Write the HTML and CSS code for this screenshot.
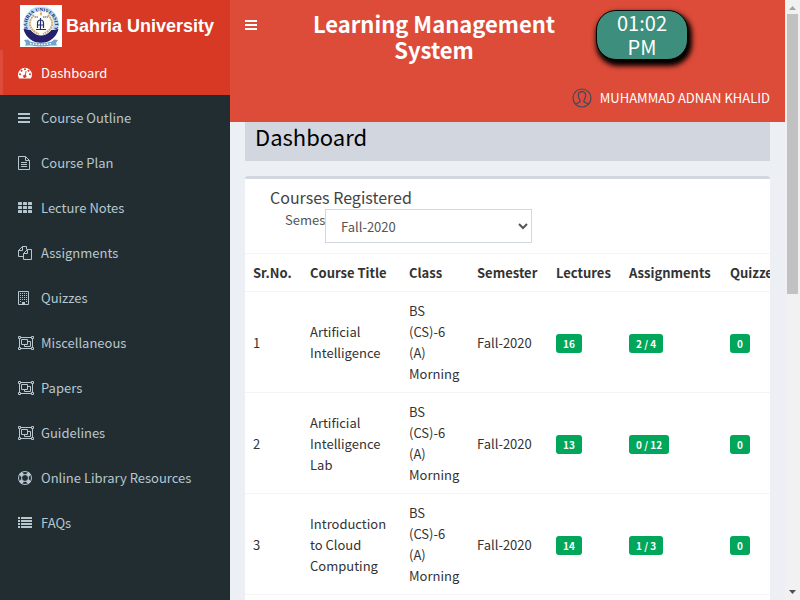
FILE: index.html
```html
<!DOCTYPE html>
<html lang="en">
<head>
<meta charset="utf-8">
<title>Learning Management System</title>
<link rel="stylesheet" href="styles.css">
</head>
<body>
<svg class="defs" aria-hidden="true">
  <symbol id="group" viewBox="0 0 16 14">
    <path fill="none" stroke="currentColor" d="M.5.5h2v2h-2zM13.500.5h2v2h-2zM.5 11.500h2v2h-2zM13.500 11.500h2v2h-2zM3 1.500h10M3 12.500h10M1.500 3v8M14.500 3v8M3.500 3.500h6v5h-6zM9.500 5.500h3v5h-6v-2"/>
  </symbol>
  <symbol id="bars" viewBox="0 0 12 10">
    <path fill="currentColor" d="M0 0h12v2H0zM0 4h12v2H0zM0 8h12v2H0z"/>
  </symbol>
</svg>
<div class="app">
  <aside class="sidebar">
    <a class="brand" href="#">
      <svg class="crest" viewBox="0 0 42 42" aria-hidden="true">
        <path fill="#fff" d="M0 0h42v42H0z"/>
        <circle cx="21" cy="19" r="17.500" fill="#b9dff2"/>
        <path fill="#24206b" d="M3.500 24a18 18 0 0 0 35 0l-4.500 1H8z"/>
        <circle cx="21" cy="18" r="12.500" fill="#fffdf8"/>
        <path fill="none" stroke="#c9ad7c" stroke-width="2" stroke-dasharray="2 .6" d="M14 10c-7 7-5 15 5 19M28 10c7 7 5 15-5 19"/>
        <path fill="none" stroke="#4b4a60" d="M14.500 12h4M23 12h5" stroke-dasharray="1.500 .5"/>
        <path fill="#f39a24" d="M21 6l1 3-1 2-1-2z"/>
        <path fill="none" stroke="#24306f" stroke-width="1.200" d="M20.500 13v12M16 24.500h10M17.500 23v-5q0-3 3-3t3 3v5M17 20h7"/>
        <path fill="#6fa6cc" d="M4 35l4-.5 2 2q11 3 22 0l2-2 4 .5-2 3 1 2.500h-6q-10 2-20 0H5l1-2.500z"/>
        <path fill="none" stroke="#fff" stroke-width="1.400" stroke-dasharray="1.500 1.300" d="M10 38.500q11 2 22 0"/>
        <path id="arc" fill="none" d="M7.500 24A14 14 0 1 1 34.500 24"/>
        <text class="crest-text"><textPath href="#arc" startOffset="50%">BAHRIA UNIVERSITY</textPath></text>
      </svg>
      <span>Bahria University</span>
    </a>
    <nav>
      <a class="item active" href="#"><span class="icon"><svg width="14" height="14" viewBox="0 0 14 14"><path fill="currentColor" fill-rule="evenodd" d="M1.200 12.600A7 7 0 1 1 12.800 12.600H1.200zM7 4.200a1 1 0 1 0 0-2 1 1 0 0 0 0 2zM3.500 5.700a1 1 0 1 0 0-2 1 1 0 0 0 0 2zM10.500 5.700a1 1 0 1 0 0-2 1 1 0 0 0 0 2zM2 9.200a1 1 0 1 0 0-2 1 1 0 0 0 0 2zM12 9.200a1 1 0 1 0 0-2 1 1 0 0 0 0 2zM7.700 5l-.9 3.700a1.600 1.600 0 1 0 .9.300l.9-3.700z"/></svg></span>Dashboard</a>
      <a class="item" href="#"><span class="icon"><svg width="12" height="10"><use href="#bars"/></svg></span>Course Outline</a>
      <a class="item" href="#"><span class="icon"><svg width="12" height="14" viewBox="0 0 12 14"><path fill="none" stroke="currentColor" d="M.5.5h7l4 4v9H.5zM7.500.5v4h4M3 6.500h6M3 8.500h6M3 10.500h6"/></svg></span>Course Plan</a>
      <a class="item" href="#"><span class="icon"><svg width="14" height="11" viewBox="0 0 14 11"><g fill="currentColor"><rect width="4" height="3" rx=".6"/><rect x="5" width="4" height="3" rx=".6"/><rect x="10" width="4" height="3" rx=".6"/><rect y="4" width="4" height="3" rx=".6"/><rect x="5" y="4" width="4" height="3" rx=".6"/><rect x="10" y="4" width="4" height="3" rx=".6"/><rect y="8" width="4" height="3" rx=".6"/><rect x="5" y="8" width="4" height="3" rx=".6"/><rect x="10" y="8" width="4" height="3" rx=".6"/></g></svg></span>Lecture Notes</a>
      <a class="item" href="#"><span class="icon"><svg width="14" height="14" viewBox="0 0 14 14"><path fill="none" stroke="currentColor" d="M5.500 10.500h-5v-6l4-4h4v3M4.500.5v4h-4M5.500 13.500v-6l4-4h4v10zM9.500 3.500v4h-4"/></svg></span>Assignments</a>
      <a class="item" href="#"><span class="icon"><svg width="11" height="14" viewBox="0 0 11 14"><path fill="none" stroke="currentColor" d="M.5.500h10v13H.5z"/><path fill="none" stroke="currentColor" stroke-dasharray="1 1" d="M2 2.500h7M2 4.500h7M2 6.500h7M2 8.500h7M2 10.500h1M8 10.500h1"/><path fill="currentColor" d="M4 11h3v3H4z"/></svg></span>Quizzes</a>
      <a class="item" href="#"><span class="icon"><svg width="16" height="14"><use href="#group"/></svg></span>Miscellaneous</a>
      <a class="item" href="#"><span class="icon"><svg width="16" height="14"><use href="#group"/></svg></span>Papers</a>
      <a class="item" href="#"><span class="icon"><svg width="16" height="14"><use href="#group"/></svg></span>Guidelines</a>
      <a class="item" href="#"><span class="icon"><svg width="14" height="14" viewBox="0 0 14 14"><g fill="none" stroke="currentColor"><circle cx="7" cy="7" r="6.500"/><circle cx="7" cy="7" r="3.500"/><path stroke-width="4" d="M2.200 2.200l2.500 2.500M11.800 2.200L9.300 4.700M2.200 11.800l2.500-2.500M11.800 11.800L9.300 9.300"/></g></svg></span>Online Library Resources</a>
      <a class="item" href="#"><span class="icon"><svg width="14" height="11" viewBox="0 0 14 11"><path fill="currentColor" d="M0 0h2v2H0zM3 0h11v2H3zM0 3h2v2H0zM3 3h11v2H3zM0 6h2v2H0zM3 6h11v2H3zM0 9h2v2H0zM3 9h11v2H3z"/></svg></span>FAQs</a>
    </nav>
  </aside>
  <div class="main">
    <header class="topbar">
      <div class="topbar-row">
        <button class="toggle" type="button" aria-label="Toggle navigation"><svg width="12" height="10"><use href="#bars"/></svg></button>
        <h1 class="site-title">Learning Management System</h1>
        <div class="clock">01:02 PM</div>
      </div>
      <a class="user" href="#">
        <svg width="20" height="20" viewBox="0 0 20 20" aria-hidden="true"><g fill="none" stroke="#3b4a5e" stroke-width="1.200"><circle cx="10" cy="10" r="9"/><path d="M3.500 16.200c1-1.200 4.300-1.300 4.600-2.700.1-1-.1-1.500-.6-2.300C6.500 9.500 6 6.500 7 4.500c1-1.700 5-1.700 6 0 1 2 .5 5-.5 6.700-.5.8-.7 1.300-.6 2.300.3 1.400 3.600 1.500 4.600 2.700"/><path stroke-width=".6" d="M7.500 5c1.500-.9 3.500-.9 5 0"/></g></svg>
        <span>MUHAMMAD ADNAN KHALID</span>
      </a>
    </header>
    <main class="content">
      <h2 class="page-title">Dashboard</h2>
      <section class="box">
        <div class="box-head">
          <h3 class="box-title">Courses Registered</h3>
          <div class="filter">
            <label for="semester">Semester</label>
            <select id="semester"><option>Fall-2020</option></select>
          </div>
        </div>
        <div class="table-wrap">
          <table>
            <colgroup><col class="c-no"><col class="c-title"><col class="c-class"><col class="c-sem"><col class="c-lec"><col class="c-asg"><col class="c-quiz"></colgroup>
            <thead><tr><th>Sr.No.</th><th>Course Title</th><th>Class</th><th>Semester</th><th>Lectures</th><th>Assignments</th><th>Quizzes</th></tr></thead>
            <tbody>
              <tr><td>1</td><td>Artificial Intelligence</td><td>BS (CS)-6 (A) Morning</td><td>Fall-2020</td><td><span class="badge">16</span></td><td><span class="badge">2 / 4</span></td><td><span class="badge">0</span></td></tr>
              <tr><td>2</td><td>Artificial Intelligence Lab</td><td>BS (CS)-6 (A) Morning</td><td>Fall-2020</td><td><span class="badge">13</span></td><td><span class="badge">0 / 12</span></td><td><span class="badge">0</span></td></tr>
              <tr><td>3</td><td>Introduction to Cloud Computing</td><td>BS (CS)-6 (A) Morning</td><td>Fall-2020</td><td><span class="badge">14</span></td><td><span class="badge">1 / 3</span></td><td><span class="badge">0</span></td></tr>
              <tr class="spacer"><td colspan="7"></td></tr>
            </tbody>
          </table>
        </div>
      </section>
    </main>
  </div>
  <div class="scrollbar" aria-hidden="true">
    <svg width="15" height="14" viewBox="0 0 15 14"><path fill="#a3a3a3" d="M4 10l3.500-4L11 10z"/></svg>
    <div class="track"><div class="thumb"></div></div>
    <svg width="15" height="14" viewBox="0 0 15 14"><path fill="#505050" d="M4 4l3.500 4L11 4z"/></svg>
  </div>
</div>
</body>
</html>
```
FILE: styles.css
```css
* { box-sizing: border-box; }
body {
  margin: 0;
  font-family: "Noto Sans CJK SC", "Open Sans", sans-serif;
  font-size: 13px;
  line-height: 21px;
  color: #333;
  background: #ecf0f5;
}
h1, h2, h3 { margin: 0; }
a { color: inherit; text-decoration: none; }
svg { display: block; }
.defs { position: absolute; width: 0; height: 0; }

.app { display: flex; height: 100vh; overflow: hidden; }

.sidebar { flex: 0 0 230px; min-width: 0; background: #222d32; color: #b8c7ce; }
.brand {
  display: flex;
  align-items: center;
  gap: 4px;
  height: 50px;
  padding: 2px 0 0 20px;
  background: #d73925;
  color: #fff;
  font-family: "Liberation Sans", Arial, sans-serif;
  font-size: 18px;
  font-weight: bold;
  white-space: nowrap;
}
.crest { width: 42px; height: 42px; flex: none; }
.crest-text {
  font-family: "Liberation Serif", serif;
  font-size: 5px;
  font-weight: bold;
  fill: #24206b;
  text-anchor: middle;
}
.item {
  display: flex;
  align-items: center;
  height: 45px;
  padding-left: 15px;
  border-left: 3px solid transparent;
}
.item.active { background: #d73925; border-left-color: #dd4b39; color: #fff; }
.icon { flex: 0 0 23px; }

.main { flex: 1; min-width: 0; overflow: hidden; }
.topbar { height: 122px; padding-top: 10px; background: #dd4b39; color: #fff; }
.topbar-row { display: flex; align-items: flex-start; padding-right: 97px; }
.toggle { padding: 10px 15px; border: 0; background: none; color: #fff; }
.site-title { flex: 1; font-size: 22px; line-height: 26px; text-align: center; }
.clock {
  width: 92px;
  padding: 0 16px;
  border: 1px solid #000;
  border-radius: 20px;
  background: #3d8e7d;
  box-shadow: 2px 4px 5px 2px #000;
  font-size: 20px;
  line-height: 24px;
  text-align: center;
}
.user {
  display: flex;
  justify-content: flex-end;
  align-items: center;
  gap: 8px;
  padding: 26px 15px 0;
}
.user span { line-height: 20px; }

.content { padding: 0 15px; }
.page-title {
  padding: 0 10px 11px;
  background: #d2d6de;
  color: #000;
  font-size: 22px;
  font-weight: 400;
  line-height: 28px;
}
.box {
  margin-top: 15px;
  border-top: 3px solid #d2d6de;
  border-radius: 3px;
  background: #fff;
}
.box-head { padding: 10px 25px; }
.box-title { margin-bottom: 4px; color: #444; font-size: 16px; font-weight: 400; line-height: 16px; }
.filter { display: flex; padding-left: 15px; color: #555; }
.filter label { width: 40px; white-space: nowrap; }
.filter select {
  position: relative;
  width: 207px;
  height: 34px;
  padding: 6px 11px;
  border: 1px solid #d2d6de;
  border-radius: 0;
  background: #fff;
  color: #555;
  font: inherit;
}
.table-wrap { overflow: hidden; }
table { width: 557px; table-layout: fixed; border-collapse: collapse; }
.c-no { width: 57px; }
.c-title { width: 99px; }
.c-class { width: 68px; }
.c-sem { width: 79px; }
.c-lec { width: 73px; }
.c-asg { width: 101px; }
.c-quiz { width: 80px; }
th, td { padding: 8px; border-top: 1px solid #f4f4f4; text-align: left; vertical-align: middle; }
.spacer td { height: 60px; }
.badge {
  display: inline-block;
  padding: 0 7px;
  border-radius: 3px;
  background: #00a65a;
  color: #fff;
  font-size: 10px;
  font-weight: bold;
  line-height: 19px;
  vertical-align: middle;
}

.scrollbar { display: flex; flex-direction: column; flex: 0 0 15px; background: #f1f1f1; }
.track { flex: 1; padding: 0 2px; }
.thumb { height: 49%; background: #c1c1c1; }
```
